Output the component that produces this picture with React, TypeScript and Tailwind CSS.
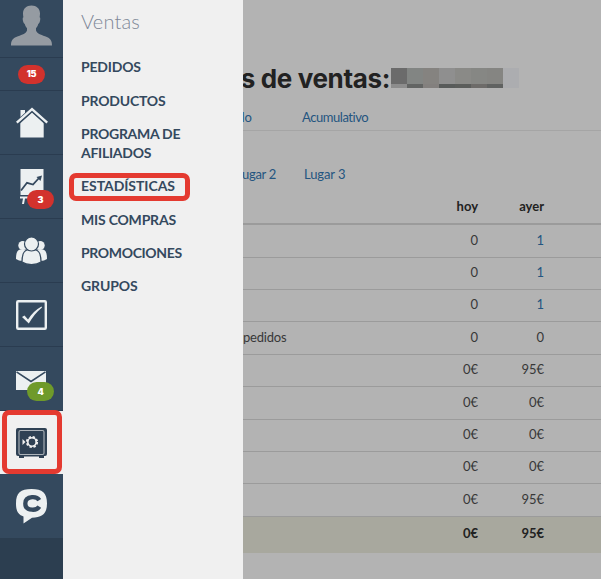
import type { ReactNode } from 'react';
import clsx from 'clsx';

interface MenuEntry {
  label: string;
  className: string;
  active?: boolean;
}

interface Row {
  label?: string;
  today: string;
  yesterday: string;
  height: string;
  link?: boolean;
}

const menu: MenuEntry[] = [
  { label: 'PEDIDOS', className: 'h-[34px] tracking-[-0.2px]' },
  { label: 'PRODUCTOS', className: 'h-[33px] tracking-[-0.2px]' },
  { label: 'PROGRAMA DE AFILIADOS', className: 'h-[52px] w-[120px] tracking-[-0.28px]' },
  { label: 'ESTADÍSTICAS', className: 'h-[34px] tracking-[-0.05px]', active: true },
  { label: 'MIS COMPRAS', className: 'h-[33px] tracking-[-0.2px]' },
  { label: 'PROMOCIONES', className: 'h-[33px] tracking-[-0.35px]' },
  { label: 'GRUPOS', className: 'h-[33px] tracking-[-0.1px]' },
];

const rows: Row[] = [
  { today: '0', yesterday: '1', height: 'h-[33px]', link: true },
  { today: '0', yesterday: '1', height: 'h-8', link: true },
  { today: '0', yesterday: '1', height: 'h-8', link: true },
  { label: 'pedidos', today: '0', yesterday: '0', height: 'h-[33px]' },
  { today: '0€', yesterday: '95€', height: 'h-8' },
  { today: '0€', yesterday: '0€', height: 'h-[33px]' },
  { today: '0€', yesterday: '0€', height: 'h-8' },
  { today: '0€', yesterday: '0€', height: 'h-8' },
  { today: '0€', yesterday: '95€', height: 'h-[33px]' },
];

const maskTop = ['bg-[#6b6b6b]', 'bg-[#828583]', 'bg-[#858380]', 'bg-[#8f8f8f]', 'bg-[#8a8a87]', 'bg-[#868784]', 'bg-[#858582]'];
const maskBottom = ['bg-[#8d8d8d]', 'bg-[#626463]', 'bg-[#83807e]', 'bg-[#585b5a]', 'bg-[#5b5d5b]', 'bg-[#6d6b69]', 'bg-[#606261]'];

function NavItem({ children, className }: { children: ReactNode; className?: string }) {
  return (
    <div className={clsx('relative flex shrink-0 items-center justify-center border-b border-[#2a3c50]', className)}>
      {children}
    </div>
  );
}

function Badge({ children, className }: { children: ReactNode; className: string }) {
  return (
    <span className={clsx("flex h-[19px] w-[27px] items-center justify-center rounded-full font-['Inter',sans-serif] text-[9px] font-black tracking-[-0.2px] text-white", className)}>
      {children}
    </span>
  );
}

function AvatarIcon() {
  return (
    <svg width="41" height="41" viewBox="0 0 41 41" fill="#959ba2">
      <path d="M20.5 0.500C25.500 0.500 29 3.500 29 8.500C29 10 28.800 11.300 28.600 12.200C29.700 12.500 29.300 15 28.700 17C28.300 18.300 27.800 18.700 27.300 18.800C27 20.500 26 22 25 23.200V25.500C26 28.500 29.500 29.700 34 31.200C39.500 33 41 35.500 41 40.500H0C0 35.500 1.500 33 7 31.200C11.500 29.700 15 28.500 16 25.500V23.200C15 22 14 20.500 13.700 18.800C13.200 18.700 12.700 18.300 12.300 17C11.700 15 11.300 12.500 12.400 12.200C12.200 11.300 12 10 12 8.500C12 3.500 15.500 0.500 20.500 0.500Z" />
    </svg>
  );
}

function HomeIcon() {
  return (
    <svg width="32" height="31" viewBox="0 0 32 31" fill="#ecf0f1">
      <path d="M4.500 3H9V7L4.500 11.500Z" />
      <path d="M4.300 15.500L16 5L27.700 15.500V30.500H4.300Z" />
      <path d="M0.800 16.400L16 2.600L31.200 16.400" fill="none" stroke="#34495e" strokeWidth="4.600" />
      <path d="M0.800 15.700L16 2.200L31.200 15.700" fill="none" stroke="#ecf0f1" strokeWidth="2.400" />
    </svg>
  );
}

function ChartIcon() {
  return (
    <svg width="24" height="36" viewBox="0 0 24 36" fill="#ecf0f1">
      <path d="M0.500 0H23.500V26H0.500Z" />
      <path d="M0 27.500H24V29.500H5L4 35H2L3 29.500H0Z" />
      <path d="M1 21.500L7 13.800L13 15.500L19 9" fill="none" stroke="#34495e" strokeWidth="1.800" />
      <path d="M16.500 8L22 6.500L20.500 12Z" fill="#34495e" />
    </svg>
  );
}

function PeopleIcon() {
  return (
    <svg width="31" height="28" viewBox="0 0 31 28" fill="#ecf0f1">
      <circle cx="6.800" cy="8.500" r="4.500" />
      <circle cx="24.200" cy="8.500" r="4.500" />
      <path d="M0 22C0 16.500 1 13 4 12.500H27C30 13 31 16.500 31 22C29 23.300 27 23.800 25 23.800H6C4 23.800 2 23.300 0 22Z" />
      <path d="M6 25C6 18 7.500 14 11 13H20C23.500 14 25 18 25 25C22 27.200 19 27.600 15.500 27.600C12 27.600 9 27.200 6 25Z" stroke="#34495e" strokeWidth="1.200" />
      <circle cx="15.500" cy="7" r="7" stroke="#34495e" strokeWidth="1.200" />
    </svg>
  );
}

function CheckIcon() {
  return (
    <svg width="31" height="30" viewBox="0 0 31 30">
      <rect x="1.200" y="1.200" width="28.600" height="27.600" rx="1" fill="none" stroke="#ecf0f1" strokeWidth="2.400" />
      <path d="M6 17L8.500 15.500L12 19.500C15.500 14 20 9.500 25.500 6.500L26 7.500C20.500 12 16.500 17 12.800 23.500Z" fill="#ecf0f1" />
    </svg>
  );
}

function MailIcon() {
  return (
    <svg width="30" height="19" viewBox="0 0 30 19">
      <path d="M0 0H30V19H0Z" fill="#ecf0f1" />
      <path d="M0.500 0.800L15 10.500L29.500 0.800" fill="none" stroke="#34495e" strokeWidth="1.600" />
    </svg>
  );
}

function SafeIcon() {
  return (
    <svg width="31" height="30" viewBox="0 0 31 30">
      <path d="M2 0H29Q31 0 31 2V26Q31 28 29 28H28V30H23V28.500H8V30H3V28H2Q0 28 0 26V2Q0 0 2 0Z" fill="#2f4154" />
      <rect x="3" y="2.500" width="25" height="24" rx="1.500" fill="none" stroke="#aeb4ba" strokeWidth="1.100" />
      <circle cx="16" cy="14" r="5" fill="none" stroke="#f0f0f0" strokeWidth="2.200" strokeDasharray="2.300 1.627" />
      <circle cx="16" cy="14" r="4.200" fill="none" stroke="#f0f0f0" strokeWidth="1.600" />
      <path d="M6.500 11L9.500 14L6.500 17Z" fill="#f0f0f0" />
    </svg>
  );
}

function ChatIcon() {
  return (
    <svg width="31" height="35" viewBox="0 0 31 35">
      <path d="M15.500 0C26.500 0 31 4 31 14.500C31 24.500 26.500 28.500 16 28.800L7.500 34.500V27.500C2 25.500 0 22 0 14.500C0 4 4.500 0 15.500 0Z" fill="#ecf0f1" />
      <path d="M23.300 11.200C21.500 8.300 18.500 7.900 16 8.100C12 8.400 9.300 10.500 9.300 14.400C9.300 18.200 12 20.400 16 20.700C18.500 20.900 21.500 20.500 23.300 17.600" fill="none" stroke="#34495e" strokeWidth="4.300" />
    </svg>
  );
}

function Sidebar() {
  return (
    <nav className="flex w-[63px] shrink-0 flex-col bg-[#2c3e50]">
      <div className="flex flex-col bg-[#34495e]">
        <NavItem className="h-[58px] pb-[6px]">
          <AvatarIcon />
        </NavItem>
        <NavItem className="h-[33px]">
          <Badge className="bg-[#d2322d]">15</Badge>
        </NavItem>
        <NavItem className="h-16">
          <HomeIcon />
        </NavItem>
        <NavItem className="h-16">
          <ChartIcon />
          <Badge className="absolute top-[35px] left-[27px] bg-[#d2322d]">3</Badge>
        </NavItem>
        <NavItem className="h-16">
          <PeopleIcon />
        </NavItem>
        <NavItem className="h-16">
          <CheckIcon />
        </NavItem>
        <NavItem className="h-16 pr-px pt-[3px]">
          <MailIcon />
          <Badge className="absolute top-[35px] left-[27px] bg-[#6f9a2a]">4</Badge>
        </NavItem>
        <div className="relative flex h-[63px] items-center justify-center bg-[#f0f0f0]">
          <SafeIcon />
          <div className="absolute -top-px left-[2px] h-16 w-[60px] rounded-[7px] border-[5px] border-[#e43a30]" />
        </div>
        <div className="flex h-16 items-center justify-center">
          <ChatIcon />
        </div>
      </div>
    </nav>
  );
}

function SubMenu() {
  return (
    <div className="w-[180px] shrink-0 bg-[#f0f0f0] pl-[18px]">
      <h2 className="mt-[9px] h-12 text-[20px] leading-6 font-light tracking-[0.15px] text-[#7d8797]">Ventas</h2>
      <ul className="text-[14px] leading-[19px] font-bold text-[#34495e]">
        {menu.map((item) => (
          <li key={item.label} className={clsx('relative', item.className)}>
            {item.label}
            {item.active && (
              <div className="absolute -top-[3px] -left-3 h-7 w-[121px] rounded-[7px] border-[5px] border-[#e43a30]" />
            )}
          </li>
        ))}
      </ul>
    </div>
  );
}

function Stats() {
  return (
    <main className="min-w-0 flex-1 overflow-hidden bg-[#b3b3b3] text-[13px] text-[#383838]">
      <div className="mt-[62px] flex h-8 items-center">
        <h1 className="flex w-[147px] shrink-0 justify-end pt-px font-['Inter',sans-serif] text-[26px] font-bold tracking-[-0.35px] whitespace-nowrap text-[#222]">
          s de ventas:
        </h1>
        <div className="ml-px flex">
          <div>
            <div className="flex">
              {maskTop.map((tone, i) => (
                <div key={i} className={clsx('h-4 w-4', tone)} />
              ))}
            </div>
            <div className="flex">
              {maskBottom.map((tone, i) => (
                <div key={i} className={clsx('h-1 w-4', tone)} />
              ))}
            </div>
          </div>
          <div className="h-5 w-4 bg-[#acadb0]" />
        </div>
      </div>
      <div className="flex h-[37px] border-b border-[#a5a5a5] pt-[13px] leading-5 text-[#245580]">
        <span className="flex w-[9px] shrink-0 justify-end">lo</span>
        <span className="ml-[50px] tracking-[-0.45px]">Acumulativo</span>
      </div>
      <div className="flex h-[94px] border-b-2 border-[#9b9b9b]">
        <div className="flex w-full flex-col justify-between pt-8">
          <div className="flex leading-[22px] text-[#245580]">
            <span className="flex w-[33px] shrink-0 justify-end tracking-[-0.3px] whitespace-nowrap">ugar 2</span>
            <span className="ml-[28px] tracking-[-0.1px]">Lugar 3</span>
          </div>
          <div className="flex pb-[7px] leading-5 font-bold text-[#222]">
            <span className="w-[235px] text-right">hoy</span>
            <span className="w-[66px] text-right">ayer</span>
          </div>
        </div>
      </div>
      {rows.map((row, i) => (
        <div key={i} className={clsx('flex items-center border-b border-[#9b9b9b] pb-px', row.height)}>
          <span className="w-[150px] tracking-[-0.2px]">{row.label}</span>
          <span className="w-[85px] text-right">{row.today}</span>
          <span className={clsx('w-[66px] text-right', row.link && 'text-[#245580]')}>{row.yesterday}</span>
        </div>
      ))}
      <div className="flex h-9 items-center bg-[#a8a89e] pb-[3px] font-bold text-[#222]">
        <span className="w-[235px] text-right">0€</span>
        <span className="w-[66px] text-right">95€</span>
      </div>
    </main>
  );
}

export default function App() {
  return (
    <div className="flex h-[579px] w-[601px] overflow-hidden font-['Lato',sans-serif]">
      <Sidebar />
      <SubMenu />
      <Stats />
    </div>
  );
}
